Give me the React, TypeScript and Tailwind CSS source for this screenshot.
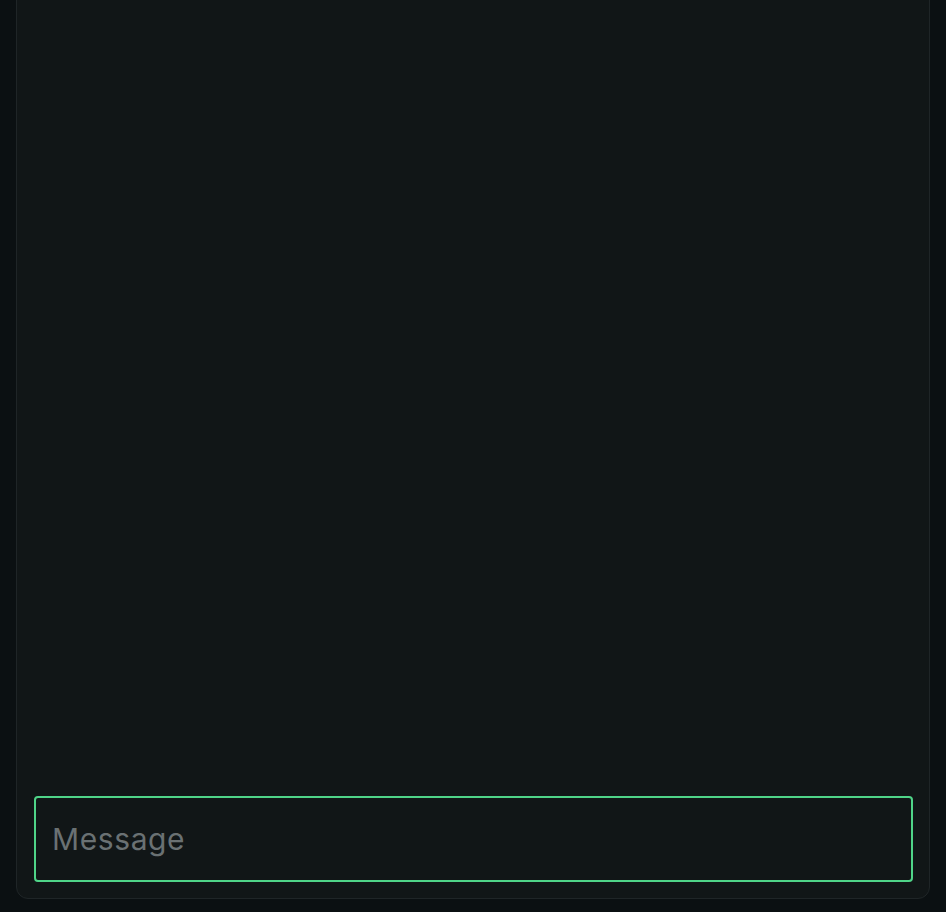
export default function App() {
  return (
    <div className="h-screen overflow-hidden bg-[#0b1012] px-4 pb-[13px] flex flex-col" style={{ fontFamily: 'Inter, "Noto Sans", sans-serif' }}>
      <div className="-mt-4 flex-1 flex flex-col justify-end rounded-xl border border-[#1f2527] bg-[#111617] pl-[17px] pr-4 pb-4 pt-4">
        <input
          type="text"
          placeholder="Message"
          className="w-full rounded-[4px] border-2 border-[#4fd488] bg-[#111617] px-4 py-[23px] text-3xl leading-9 tracking-[0.02em] text-gray-200 placeholder:text-[#6a7173] outline-none"
        />
      </div>
    </div>
  );
}
